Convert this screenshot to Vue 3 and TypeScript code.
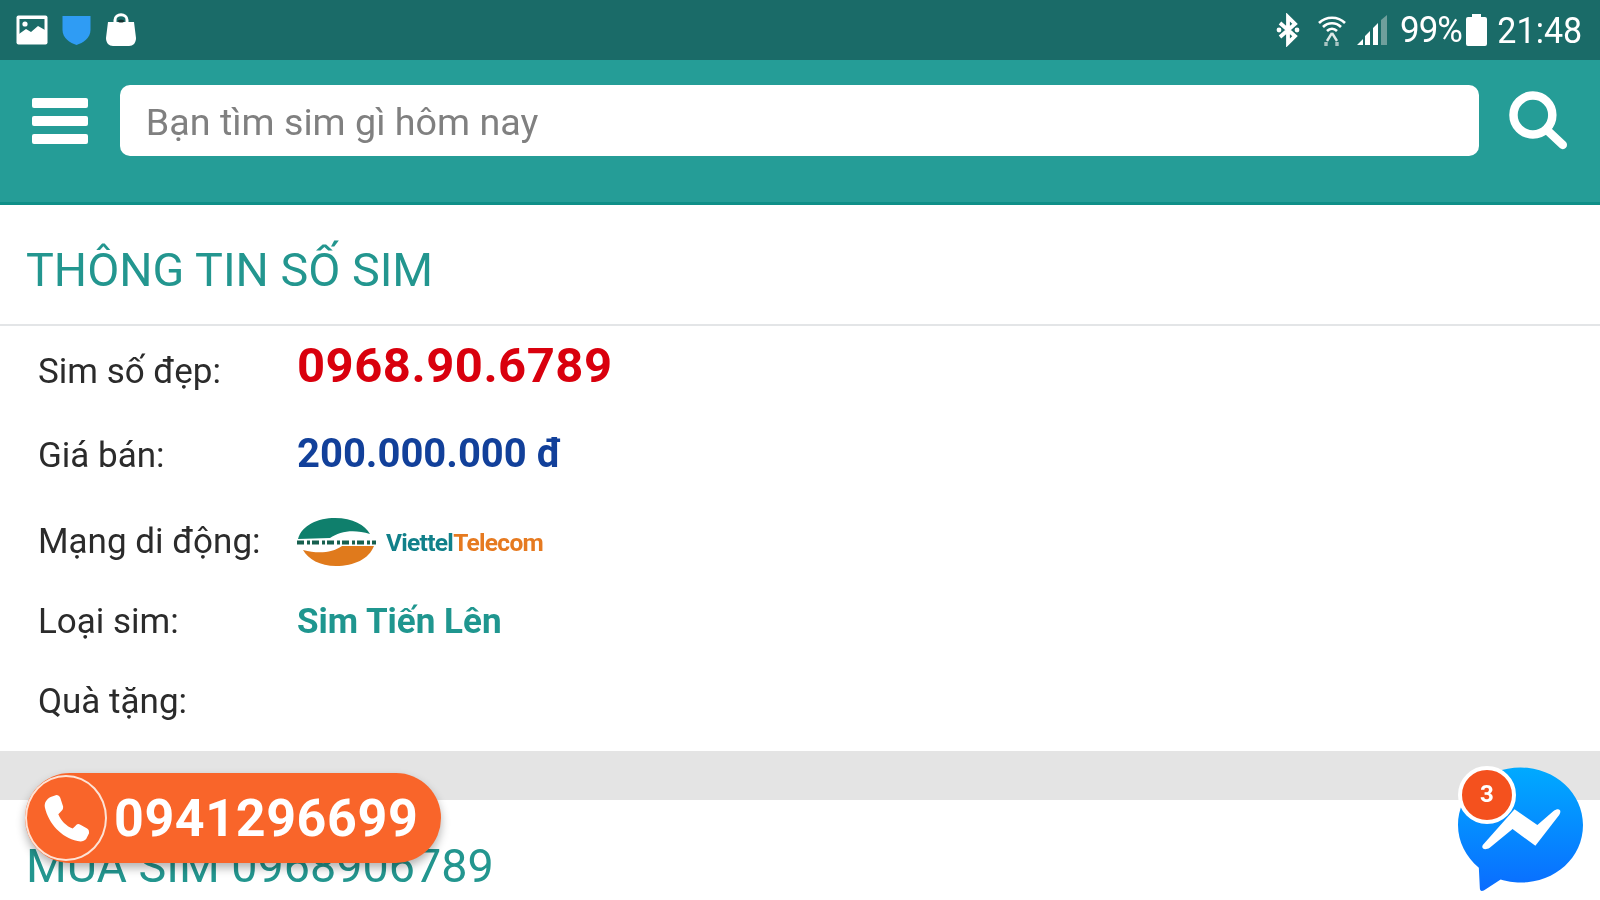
<script setup lang="ts">
interface Row { label: string; value?: string; kind: string }
const rows: Row[] = [
  { label: 'Sim số đẹp:', value: '0968.90.6789', kind: 'number' },
  { label: 'Giá bán:', value: '200.000.000 đ', kind: 'price' },
  { label: 'Mạng di động:', kind: 'logo' },
  { label: 'Loại sim:', value: 'Sim Tiến Lên', kind: 'type' },
  { label: 'Quà tặng:', kind: 'gift' },
]
</script>

<template>
  <div class="screen">
    <div class="status">
      <div class="status-left">
        <svg width="32" height="30" viewBox="0 0 32 30"><rect x="0.5" y="0.5" width="31" height="29" rx="2" fill="#fff"/><rect x="3.5" y="4" width="25" height="15" fill="#1a6b68"/><circle cx="9" cy="9" r="2.6" fill="#fff"/><path d="M3 22 L3 19 L10 14 L15 17 L22 11 L29 15 L29 22 Z" fill="#fff"/></svg>
        <svg width="29" height="30" viewBox="0 0 29 30"><path d="M0.5 1 H28.5 V15 C28.5 23 21 28 14.5 30 C8 28 0.5 23 0.5 15 Z" fill="#2f9cf4"/></svg>
        <svg width="32" height="36" viewBox="0 0 32 36"><path d="M3 10 H29 L31 26 C31 31 28 34 24 34 H8 C4 34 1 31 1 26 Z" fill="#fff"/><path d="M10 12 V8 C10 1 22 1 22 8 V12" fill="none" stroke="#fff" stroke-width="3"/><ellipse cx="16" cy="9" rx="3" ry="1.6" fill="#17302f"/></svg>
      </div>
      <div class="status-right">
        <svg class="bt" width="24" height="34" viewBox="0 0 24 34"><path d="M4 10 L19 23 L12 30 V4 L19 11 L4 24" fill="none" stroke="#fff" stroke-width="3.8"/><circle cx="3" cy="17" r="2.4" fill="#fff"/><circle cx="21" cy="17" r="2.4" fill="#fff"/></svg>
        <svg class="wifi" width="30" height="32" viewBox="0 0 30 32"><path d="M2 9 C9 2 21 2 28 9 M6 13 C11 8 19 8 24 13 M10 17 C13 14 17 14 20 17" fill="none" stroke="#fff" stroke-width="2.6"/><path d="M15 19 L10 27 M15 19 L20 27" stroke="#dfe9e8" stroke-width="2.4"/><path d="M9 28 V32 M20 28 V32" stroke="#a8c4c2" stroke-width="3.4"/></svg>
        <svg class="signal" width="32" height="32" viewBox="0 0 32 32"><path d="M0 31 L6 25 V31 Z M8 31 V22 L13 17 V31 Z M16 31 V14 L21 9 V31 Z" fill="#fff"/><path d="M24 31 V6 L30 1 V31 Z" fill="#6f9f9c"/></svg>
        <span class="pct">99%</span>
        <svg class="battery" width="23" height="32" viewBox="0 0 23 32"><path d="M7 0 H16 V3 H20 Q22 3 22 5 V30 Q22 32 20 32 H3 Q1 32 1 30 V5 Q1 3 3 3 H7 Z" fill="#fff"/></svg>
        <span class="time">21:48</span>
      </div>
    </div>

    <header class="toolbar">
      <button class="menu" aria-label="Menu"><i></i><i></i><i></i></button>
      <div class="search">Bạn tìm sim gì hôm nay</div>
      <svg class="loupe" width="62" height="62" viewBox="0 0 62 62"><circle cx="25" cy="25" r="19.5" fill="none" stroke="#fff" stroke-width="8.5"/><path d="M40 41 L55 55" stroke="#fff" stroke-width="8.5" stroke-linecap="round"/></svg>
    </header>

    <h2 class="title first">THÔNG TIN SỐ SIM</h2>

    <section class="info">
      <div v-for="row in rows" :key="row.label" class="row" :class="'row-' + row.kind">
        <span class="label">{{ row.label }}</span>
        <span v-if="row.value" class="value" :class="row.kind">{{ row.value }}</span>
        <span v-else-if="row.kind === 'logo'" class="viettel">
          <svg width="84" height="50" viewBox="0 0 84 50">
            <path d="M4 22 C8 8 24 1 41 1 C59 1 71 8 76 17 C60 12 46 14 36 21 Z" fill="#0f7f6c"/>
            <path d="M9 33 C24 37 38 36 48 29 L80 29 C75 42 60 49 42 49 C26 49 14 42 9 33 Z" fill="#e07a1c"/>
            <path d="M3 25.5 H82" stroke="#17604f" stroke-width="4" stroke-dasharray="7 3 3 2"/>
          </svg>
          <span class="vt-text"><b class="vt-a">Viettel</b><b class="vt-b">Telecom</b></span>
        </span>
      </div>
    </section>

    <div class="band"></div>
    <h2 class="title second">MUA SIM 0968906789</h2>

    <a class="call">
      <span class="call-icon">
        <svg width="48" height="48" viewBox="0 0 50 50"><path d="M9 3 L15 1 C17 1 18 2 19 4 L22 13 C22 15 22 16 20 18 L17 21 C20 28 25 33 32 36 L35 33 C37 31 38 31 40 32 L47 36 C49 37 49 39 49 41 L46 47 C44 49 41 50 37 49 C20 45 7 31 3 14 C2 9 5 5 9 3 Z" fill="#fff"/></svg>
      </span>
      <span class="call-num">0941296699</span>
    </a>

    <div class="messenger">
      <svg width="125" height="126" viewBox="0 0 126 126">
        <defs><linearGradient id="m" x1="0" y1="0" x2="0" y2="1"><stop offset="0" stop-color="#00aaff"/><stop offset="1" stop-color="#0a6cff"/></linearGradient></defs>
        <path d="M63 0 C98 0 126 26 126 58 C126 91 98 116 63 116 C55 116 50 115 43 113 L26 124 C23 125 22 124 22 121 L21 101 C8 90 0 75 0 58 C0 26 28 0 63 0 Z" fill="url(#m)"/>
        <path d="M25 78 L57 42 L80 58 L96 44 C102 40 105 43 102 48 L78 79 L55 62 L32 81 C27 84 23 82 25 78 Z" fill="#fff"/>
      </svg>
      <span class="badge">3</span>
    </div>
  </div>
</template>

<style scoped>
.screen {
  position: relative;
  width: 1600px;
  height: 900px;
  overflow: hidden;
  background: #fff;
  font-family: Roboto, "Noto Sans", sans-serif;
  color: #2b2b2b;
  filter: blur(.7px);
}
.status {
  height: 60px;
  background: #1a6b68;
  display: flex;
  align-items: center;
  justify-content: space-between;
  padding: 0 18px 0 16px;
  box-sizing: border-box;
}
.status-left { display: flex; align-items: center; gap: 14px; }
.status-right { display: flex; align-items: center; color: #fff; font-size: 36px; }
.bt { margin-right: 17px; }
.wifi { margin-right: 10px; }
.signal { margin-right: 11px; }
.pct { font-size: 36px; letter-spacing: -1px; transform: scaleX(.97); transform-origin: left; width: 61px; }
.battery { margin: 0 2px 0 4px; }
.time { font-size: 37px; transform: scaleX(.92); transform-origin: right; }
.toolbar {
  height: 145px;
  box-sizing: border-box;
  background: #259d97;
  border-bottom: 3px solid #0f8f88;
  display: flex;
  align-items: flex-start;
  padding: 25px 30px 0 32px;
}
.menu {
  width: 56px;
  margin: 13px 32px 0 0;
  padding: 0;
  background: none;
  border: 0;
  display: flex;
  flex-direction: column;
  gap: 8px;
}
.menu i { display: block; height: 10px; background: #fff; border-radius: 2px; }
.search {
  width: 1365px;
  height: 71px;
  background: #fff;
  border-radius: 10px;
  box-sizing: border-box;
  padding-left: 26px;
  line-height: 75px;
  font-size: 37.7px;
  color: #808080;
}
.loupe { margin: 5px 0 0 29px; }
.title {
  margin: 0;
  font-weight: 400;
  font-size: 46.7px;
  color: #23968f;
  padding-left: 26px;
  white-space: nowrap;
}
.first {
  height: 121px;
  line-height: 130px;
  box-sizing: border-box;
  border-bottom: 2px solid #e3e5e7;
}
.info { height: 425px; padding-left: 38px; }
.row { display: grid; grid-template-columns: 259px 1fr; align-items: center; font-size: 35px; }
.row-number { height: 87px; }
.row-number .label { margin-top: 4px; }
.row-price { height: 84px; }
.row-logo { height: 88px; }
.row-type { height: 72px; }
.row-gift { height: 88px; }
.number { font-size: 49px; font-weight: 700; color: #d9000d; letter-spacing: .5px; margin-top: -8px; }
.price { font-size: 40px; font-weight: 700; color: #12409a; margin-top: -3px; }
.type { font-weight: 700; color: #1f968f; }
.viettel { display: flex; align-items: center; margin: 2px 0 0 -3px; }
.vt-text { font-size: 24.5px; letter-spacing: -.7px; margin-left: 8px; }
.vt-a { color: #11808a; }
.vt-b { color: #e67a20; }
.band { height: 49px; background: #e4e4e4; }
.second { line-height: 60px; margin-top: 36px; }
.call {
  position: absolute;
  left: 25px;
  top: 773px;
  width: 416px;
  height: 90px;
  background: #f9652a;
  border-radius: 45px;
  box-shadow: 0 5px 10px rgba(0, 0, 0, .3);
  display: flex;
  align-items: center;
}
.call-icon {
  width: 82px;
  height: 86px;
  box-sizing: border-box;
  border: 2px solid #fde3d6;
  border-radius: 50%;
  display: flex;
  align-items: center;
  justify-content: center;
  flex: none;
}
.call-num { color: #fff; font-weight: 700; font-size: 52px; margin-left: 7px; letter-spacing: .6px; }
.messenger { position: absolute; left: 1458px; top: 767px; width: 126px; height: 126px; }
.badge {
  position: absolute;
  left: 0;
  top: -1px;
  width: 50px;
  height: 50px;
  border: 4px solid #fff;
  border-radius: 50%;
  background: #f4511e;
  color: #fff;
  font-weight: 700;
  font-size: 24px;
  line-height: 48px;
  text-align: center;
}
</style>

<style>
html, body { margin: 0; background: #fff; }
</style>
